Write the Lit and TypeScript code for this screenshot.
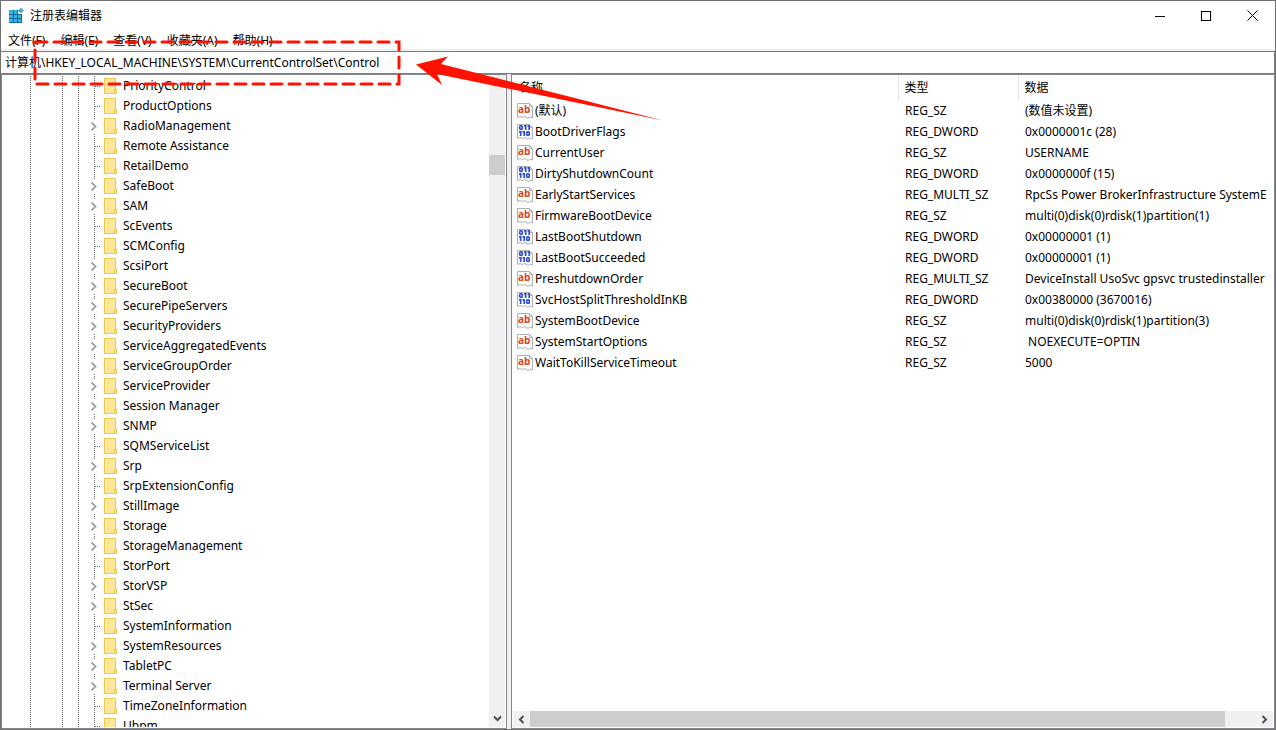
import { LitElement, html, svg, css } from "lit";
import { customElement, state } from "lit/decorators.js";

interface Key { name: string; sub: boolean }
interface Value { name: string; type: string; data: string }

const KEYS: Key[] = [
  "PriorityControl", "ProductOptions", "+RadioManagement", "Remote Assistance", "RetailDemo", "+SafeBoot",
  "+SAM", "ScEvents", "SCMConfig", "+ScsiPort", "+SecureBoot", "+SecurePipeServers", "+SecurityProviders",
  "+ServiceAggregatedEvents", "+ServiceGroupOrder", "+ServiceProvider", "+Session Manager", "+SNMP",
  "SQMServiceList", "+Srp", "SrpExtensionConfig", "+StillImage", "+Storage", "+StorageManagement", "StorPort",
  "+StorVSP", "+StSec", "SystemInformation", "+SystemResources", "+TabletPC", "+Terminal Server",
  "TimeZoneInformation", "Ubpm",
].map((k) => ({ name: k.replace("+", ""), sub: k.startsWith("+") }));

const VALUES: Value[] = [
  ["(默认)", "REG_SZ", "(数值未设置)"],
  ["BootDriverFlags", "REG_DWORD", "0x0000001c (28)"],
  ["CurrentUser", "REG_SZ", "USERNAME"],
  ["DirtyShutdownCount", "REG_DWORD", "0x0000000f (15)"],
  ["EarlyStartServices", "REG_MULTI_SZ", "RpcSs Power BrokerInfrastructure SystemE"],
  ["FirmwareBootDevice", "REG_SZ", "multi(0)disk(0)rdisk(1)partition(1)"],
  ["LastBootShutdown", "REG_DWORD", "0x00000001 (1)"],
  ["LastBootSucceeded", "REG_DWORD", "0x00000001 (1)"],
  ["PreshutdownOrder", "REG_MULTI_SZ", "DeviceInstall UsoSvc gpsvc trustedinstaller"],
  ["SvcHostSplitThresholdInKB", "REG_DWORD", "0x00380000 (3670016)"],
  ["SystemBootDevice", "REG_SZ", "multi(0)disk(0)rdisk(1)partition(3)"],
  ["SystemStartOptions", "REG_SZ", " NOEXECUTE=OPTIN"],
  ["WaitToKillServiceTimeout", "REG_SZ", "5000"],
].map(([name, type, data]) => ({ name, type, data }));

const chevron = (d: string) => html`<svg width="9" height="9" viewBox="0 0 9 9" fill="none" stroke="#505050" stroke-width="2"><path d=${d} /></svg>`;
const UP = "M1 6.5 4.5 3 8 6.5";
const DOWN = "M1 2.5 4.5 6 8 2.5";
const LEFT = "M6.5 1 3 4.5 6.5 8";
const RIGHT = "M2.5 1 6 4.5 2.5 8";

@customElement("registry-tree")
export class RegistryTree extends LitElement {
  static styles = css`
    :host { display: flex; min-width: 0; min-height: 0; overflow: hidden; background: #fff; }
    .keys { flex: 1; min-width: 0; margin: 0; padding: 1px 0 0; list-style: none; overflow: hidden; }
    .key { display: grid; grid-template-columns: 29px 32px 16px 25px 1fr; height: 20px; align-items: center; white-space: nowrap; }
    .guide { height: 20px;
      background: repeating-linear-gradient(to bottom, #6e6e6e 0 1px, transparent 1px 2px) right / 1px 100% no-repeat; }
    .toggle { appearance: none; border: 0; padding: 0; margin: 0; background: none; width: 25px; height: 20px; }
    .label { display: flex; align-items: center; gap: 6px; color: #000; text-decoration: none; }
    svg { display: block; }
  `;

  render() {
    return html`<ul class="keys">${KEYS.map((k) => html`<li class="key">
        <span class="guide"></span><span class="guide"></span><span class="guide"></span>
        ${k.sub
          ? html`<button class="toggle" aria-label="展开 ${k.name}"><svg width="25" height="20" viewBox="0 0 25 20" fill="none">
              <path d="M15.500 0V3M15.500 18V20" stroke="#6e6e6e" stroke-dasharray="1 1" />
              <path d="M12.500 6.500 16.500 10.500 12.500 14.500" stroke="#a6a6a6" stroke-width="2" /></svg></button>`
          : html`<svg width="25" height="20" viewBox="0 0 25 20" fill="none" stroke="#6e6e6e" stroke-dasharray="1 1">
              <path d="M15.500 0V20M16 10.500H22" /></svg>`}
        <a class="label" href="#"><svg width="13" height="16" viewBox="0 0 13 16">
          <path d="M.5.5H11.500V11H12.500V15.500H.5Z" fill="#ffe699" stroke="#edc74c" />
          <path d="M10.500 15V11.500H12" fill="none" stroke="#edc74c" /></svg>${k.name}</a>
      </li>`)}</ul>`;
  }
}

@customElement("value-list")
export class ValueList extends LitElement {
  static styles = css`
    :host { display: block; min-width: 0; min-height: 0; overflow: hidden; background: #fff; }
    .values { width: 100%; table-layout: fixed; border-collapse: collapse; white-space: pre; }
    .name-col { width: 385px; }
    .type-col { width: 120px; }
    th { height: 25px; padding: 0 6px; font-weight: 400; text-align: left; box-sizing: border-box; }
    th + th { border-left: 1px solid #e5e5e5; }
    td { height: 21px; padding: 0 0 0 7px; overflow: hidden; }
    td:first-child { padding-left: 4px; }
    .cell { display: flex; align-items: center; gap: 2px; }
    .glyph { font: 700 10px "Open Sans", sans-serif; }
  `;

  private icon(text: boolean) {
    return html`<svg width="16" height="16" viewBox="0 0 16 16">
      <path d="M.5.5H12.500L15.500 3.500V15L13 14 11 15.500 8 13.500 5.500 14.500 3 13.500 .5 14.500Z" fill="#fff" stroke="#b0b0b0" />
      <path d="M12.500.5V3.500H15.500" fill="none" stroke="#b0b0b0" />
      ${text
        ? svg`<text class="glyph" x="1" y="10" fill="#d24726">ab</text>`
        : svg`<g fill="none" stroke="#2f4fd8" stroke-width="1.700"><rect x="2.700" y="1.900" width="2.600" height="3.400" rx="1" /><path d="M7 1.800H8.700V6M10.500 1.800H12.200V6M2 7.800H3.700V12M5.500 7.800H7.200V12" /><rect x="9.700" y="7.900" width="2.600" height="3.400" rx="1" /></g>`}
    </svg>`;
  }

  render() {
    return html`<table class="values">
      <colgroup><col class="name-col" /><col class="type-col" /><col /></colgroup>
      <thead><tr><th scope="col">名称</th><th scope="col">类型</th><th scope="col">数据</th></tr></thead>
      <tbody>${VALUES.map((v) => html`<tr>
        <td><div class="cell">${this.icon(v.type !== "REG_DWORD")}<span>${v.name}</span></div></td><td>${v.type}</td><td>${v.data}</td></tr>`)}</tbody>
    </table>`;
  }
}

@customElement("app-root")
export class AppRoot extends LitElement {
  static styles = css`
    :host { display: block; height: 100vh; position: relative; font: 12px/16px "Noto Sans", "Noto Sans CJK SC", sans-serif; color: #000; }
    .window { height: 100%; box-sizing: border-box; display: flex; flex-direction: column; border: 1px solid #6f7174; background: #fff; overflow: hidden; }
    .titlebar { display: flex; align-items: center; height: 29px; padding-left: 7px; }
    .title { flex: 1; margin: 0; padding-left: 6px; font-size: 12px; font-weight: 400; }
    .control { appearance: none; width: 46px; height: 29px; padding: 0; border: 0; background: none; display: grid; place-items: center; }
    .menu { display: flex; align-items: center; gap: 15px; height: 17px; padding: 2px 7px 0; border-bottom: 2px solid #f0f0f0; }
    .item { appearance: none; border: 0; padding: 0; background: none; font: inherit; color: inherit; }
    .address { box-sizing: border-box; width: 100%; height: 23px; flex: none; border: 1px solid #7a7c80; border-width: 1px 1px 1px 0; padding: 0 4px 2px; font: inherit; color: inherit; outline: 0; }
    .panes { flex: 1; min-height: 0; display: grid; grid-template-columns: 506px 1fr; gap: 4px; background: #f0f0f0; }
    .pane { display: grid; min-width: 0; min-height: 0; border: 1px solid #828790; background: #fff; overflow: hidden; }
    .tree { grid-template-columns: 1fr 16px; padding: 0 1px 1px 0; grid-template-rows: minmax(0, 1fr); }
    .list { grid-template-rows: minmax(0, 1fr) 16px; padding: 0 1px 1px; }
    .vbar, .hbar { display: flex; align-items: center; background: #f0f0f0; }
    .vbar { flex-direction: column; }
    .arrow { appearance: none; border: 0; padding: 0; margin: 0; background: none; width: 17px; height: 17px; display: grid; place-items: center; flex: none; }
    .track { flex: 1; align-self: stretch; display: grid; }
    .vbar .track { grid-template-rows: 63fr 20px 535fr; }
    .hbar .track { grid-template-columns: 695fr 31fr; }
    .thumb { background: #cdcdcd; }
    .vbar .thumb { grid-row: 2; }
    .marks { position: absolute; left: 0; top: 0; pointer-events: none; }
  `;

  @state() private path = "计算机\\HKEY_LOCAL_MACHINE\\SYSTEM\\CurrentControlSet\\Control";

  render() {
    return html`<main class="window">
      <header class="titlebar">
        <svg width="16" height="16" viewBox="0 0 16 16">
          <path d="M1 2H10V6H14V15H1Z" fill="#0d6b99" />
          <path d="M1 2H5V6H1Z M6 2H9V6H6Z M1 7H5V10H1Z M6 7H9V10H6Z M10 7H13V10H10Z M1 11H5V14H1Z M6 11H9V14H6Z M10 11H13V14H10Z" fill="#35b5e6" />
          <path d="M13 0 16 2.500 13 5 10 2.500Z" fill="#1b88b8" /><path d="M13 1 15 2.500 13 3.500 11 2.500Z" fill="#5cc8ee" />
        </svg>
        <h1 class="title">注册表编辑器</h1>
        <button class="control" aria-label="最小化"><svg width="10" height="10"><path d="M0 5.500H10" stroke="#000" /></svg></button>
        <button class="control" aria-label="最大化"><svg width="10" height="10"><rect x=".5" y=".5" width="9" height="9" fill="none" stroke="#000" /></svg></button>
        <button class="control" aria-label="关闭"><svg width="11" height="11"><path d="M.5.5 10.500 10.500M10.500.5.5 10.500" stroke="#000" /></svg></button>
      </header>
      <nav class="menu">${["文件(F)", "编辑(E)", "查看(V)", "收藏夹(A)", "帮助(H)"].map((m) => html`<button class="item">${m}</button>`)}</nav>
      <input class="address" aria-label="地址" .value=${this.path} />
      <div class="panes">
        <section class="pane tree"><registry-tree></registry-tree>
          <div class="vbar"><button class="arrow" aria-label="向上">${chevron(UP)}</button><div class="track"><div class="thumb"></div></div><button class="arrow" aria-label="向下">${chevron(DOWN)}</button></div>
        </section>
        <section class="pane list"><value-list></value-list>
          <div class="hbar"><button class="arrow" aria-label="向左">${chevron(LEFT)}</button><div class="track"><div class="thumb"></div></div><button class="arrow" aria-label="向右">${chevron(RIGHT)}</button></div>
        </section>
      </div>
    </main>
    <svg class="marks" width="670" height="130" viewBox="0 0 670 130" aria-hidden="true">
      <rect x="35" y="42" width="364" height="42" fill="none" stroke="#ff1200" stroke-width="3" stroke-linecap="round" stroke-dasharray="11 7" stroke-dashoffset="-1" />
      <path d="M416 64.500 448 56.500 441 64 663 120.500 437 74 442 85Z" fill="#ff1200" />
    </svg>`;
  }
}
